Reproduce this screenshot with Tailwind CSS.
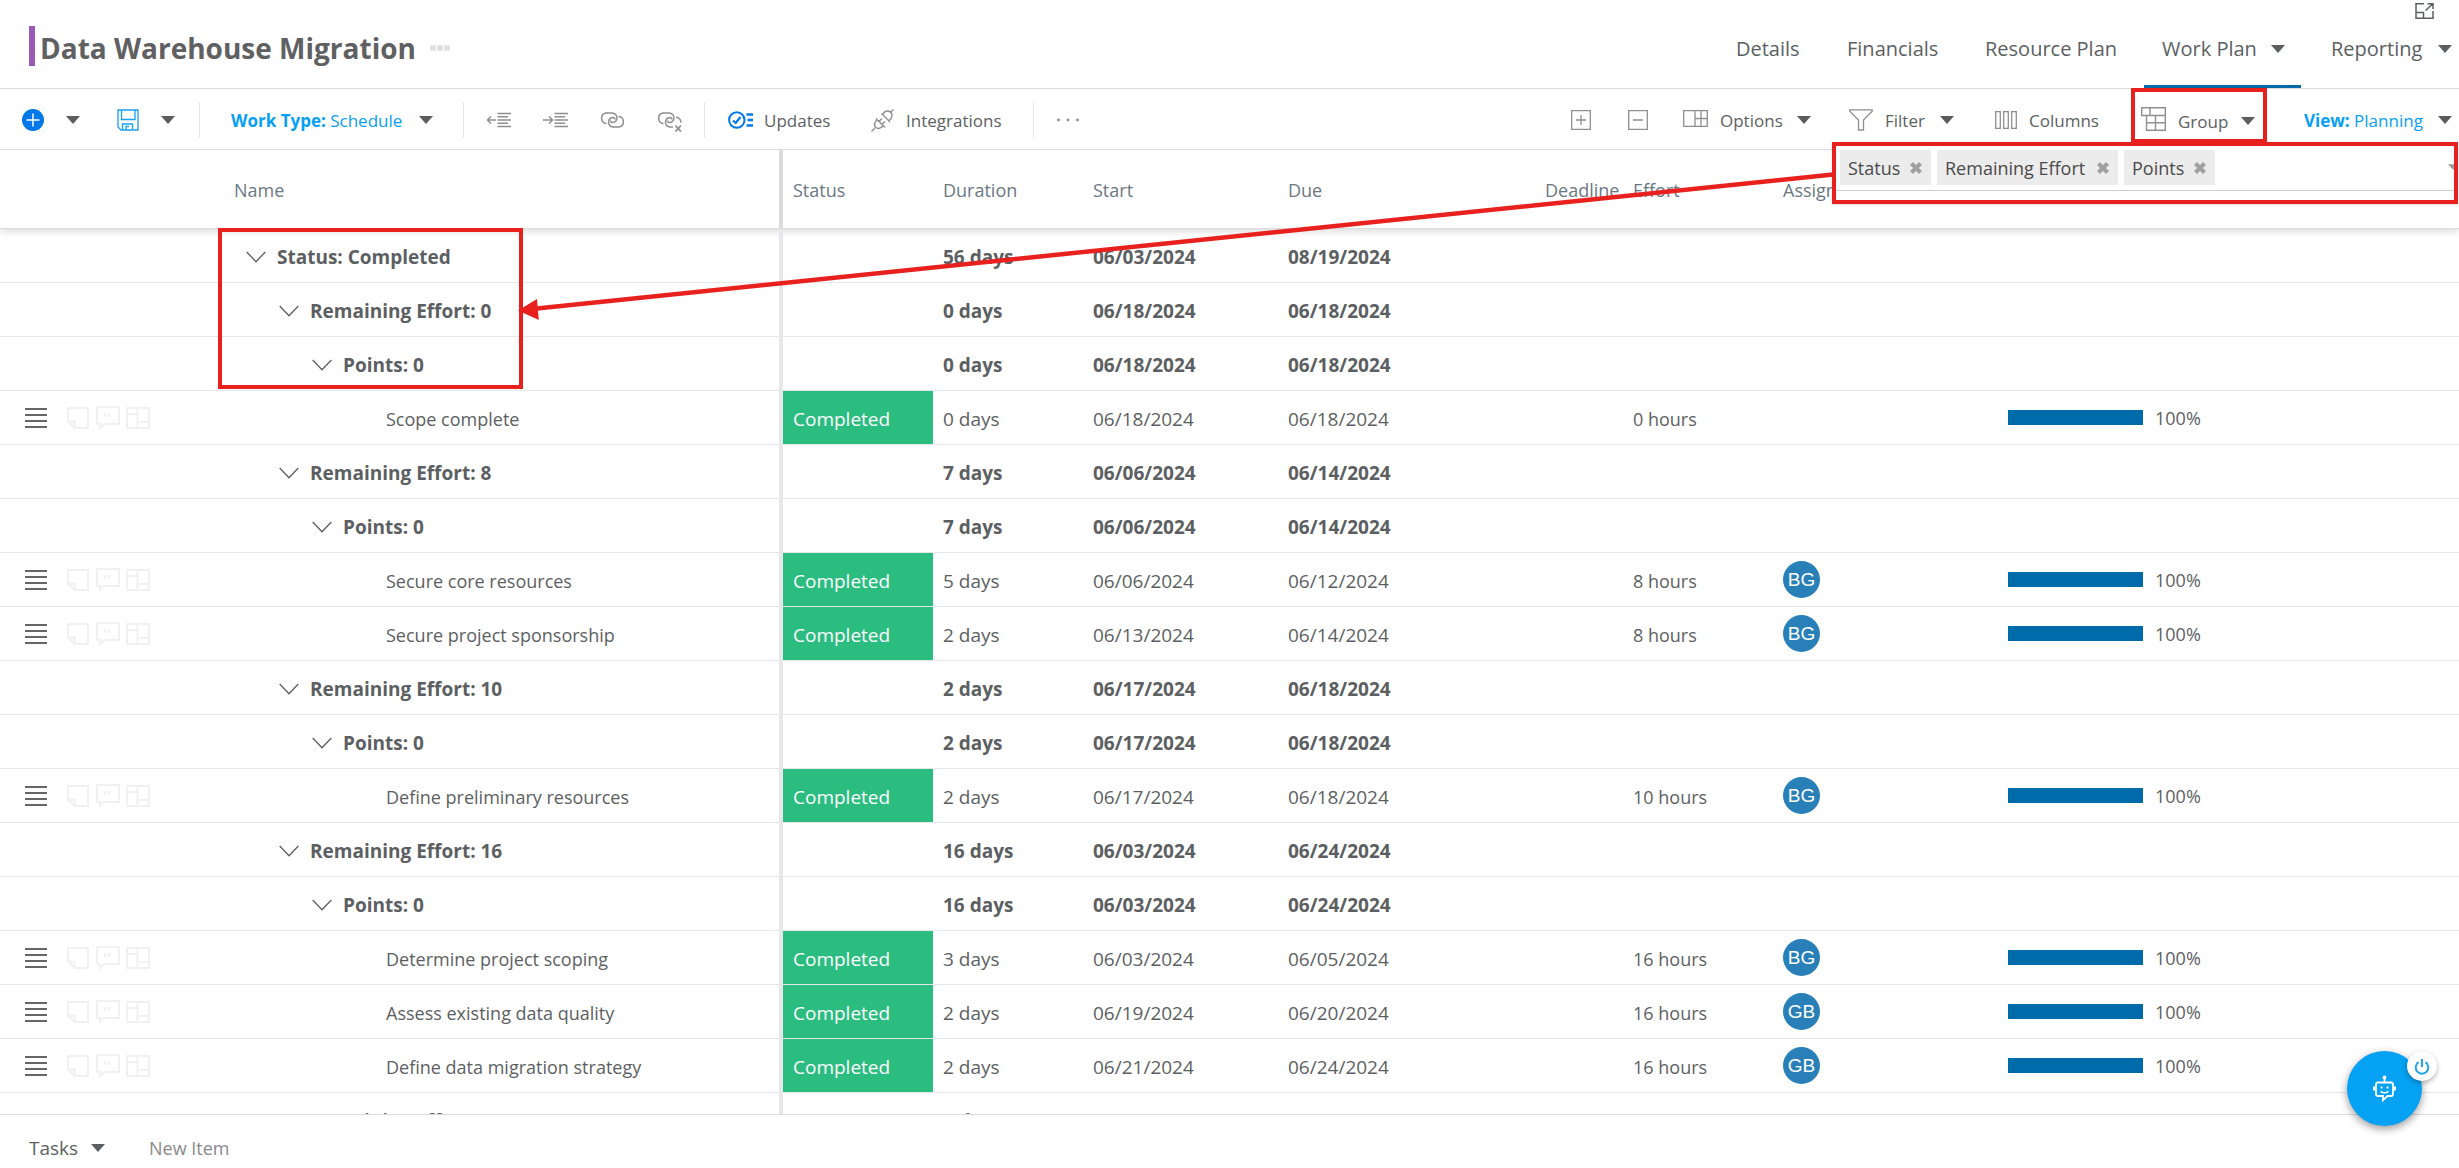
<!DOCTYPE html>
<html lang="en">
<head>
  <meta charset="UTF-8">
  <title>Data Warehouse Migration - Work Plan</title>
  <meta name="viewport" content="width=device-width,initial-scale=1">
  <script src="https://cdn.jsdelivr.net/npm/@tailwindcss/browser@4"></script>
</head>
<body class="relative h-screen flex flex-col overflow-hidden bg-white text-[#5c5f62] text-[19px] leading-6 font-['Segoe_UI','Open_Sans',sans-serif]">

  <!-- shared icons -->
  <svg class="hidden">
    <symbol id="i-caret" viewBox="0 0 14 8"><path d="M0 0h14L7 8z" fill="currentColor"/></symbol>
    <symbol id="i-chevron" viewBox="0 0 20 12"><path d="M.7 1 10 10.7 19.3 1" fill="none" stroke="currentColor" stroke-width="1.3"/></symbol>
    <symbol id="i-x" viewBox="0 0 14 14"><path d="M2.5 2.5l9 9M11.5 2.5l-9 9" fill="none" stroke="currentColor" stroke-width="4.2"/></symbol>
    <symbol id="i-drag" viewBox="0 0 22 20"><path d="M0 1h22M0 7h22M0 13h22M0 19h22" stroke="currentColor" stroke-width="2"/></symbol>
    <symbol id="i-note" viewBox="0 0 22 22"><path d="M1 1h20v20H8L1 14.500zM1 14.500h6.500V21" fill="none" stroke="currentColor" stroke-width="2"/></symbol>
    <symbol id="i-comment" viewBox="0 0 24 24"><path d="M1 1h22v17H8.500L4 22v-4H1z" fill="none" stroke="currentColor" stroke-width="2"/><path d="M9 7v4M13 7v4" stroke="currentColor" stroke-width="2.500"/></symbol>
    <symbol id="i-board" viewBox="0 0 24 22"><path d="M1 1h22v20H1zM11.500 1v20M1 7h10.500M11.500 15H23" fill="none" stroke="currentColor" stroke-width="2"/></symbol>
  </svg>

  <header class="h-[89px] shrink-0 border-b border-[#dcdcde] flex items-stretch">
    <div class="flex items-center pl-[29px]">
      <span class="w-[6px] h-10 mt-3 mb-2 bg-[#9b59b6]"></span>
      <h1 class="ml-[5px] mt-2 text-[28px] leading-8 font-bold text-[#5f6062]">Data Warehouse Migration</h1>
      <button class="ml-[14px] mt-2 flex gap-px" aria-label="More">
        <span class="size-[6px] rounded-xs bg-[#e0e0e0]"></span>
        <span class="size-[6px] rounded-xs bg-[#e0e0e0]"></span>
        <span class="size-[6px] rounded-xs bg-[#e0e0e0]"></span>
      </button>
    </div>
    <nav class="ml-auto flex items-stretch pt-[10px] whitespace-nowrap text-[20px]">
      <a href="#" class="w-[111px] flex items-center">Details</a>
      <a href="#" class="w-[138px] flex items-center">Financials</a>
      <a href="#" class="w-[159px] flex items-center">Resource Plan</a>
      <a href="#" class="w-[157px] flex items-center justify-between pl-[18px] pr-4 border-b-3 border-[#006ba6] pt-[3px]">Work Plan
        <svg class="w-[14px] h-2"><use href="#i-caret"/></svg></a>
      <a href="#" class="w-[158px] flex items-center justify-between pl-[30px] pr-[7px]">Reporting
        <svg class="w-[14px] h-2"><use href="#i-caret"/></svg></a>
    </nav>
    <button class="absolute top-[3px] right-[25px]" aria-label="Open in window">
      <svg class="w-[19px] h-4" viewBox="0 0 19 16" fill="none" stroke="currentColor" stroke-width="1.500"><path d="M9 .8H1v14.400h17V8M1 9.500h7.500v5.700M10.500 7.500 17.500 1M12.500.8H18V6"/></svg>
    </button>
  </header>

  <div class="h-[61px] pt-[2px] shrink-0 border-b border-[#dcdcde] flex items-center whitespace-nowrap text-[17px] text-[#8f8f8f]">
    <button class="ml-[22px]" aria-label="Add">
      <svg class="size-[22px]" viewBox="0 0 22 22"><circle cx="11" cy="11" r="11" fill="#0078e7"/><path d="M11 4.500v13M4.500 11h13" stroke="#fff" stroke-width="1.500"/></svg>
    </button>
    <button class="ml-[22px] text-[#5c5c5c]" aria-label="Add options"><svg class="w-[14px] h-2"><use href="#i-caret"/></svg></button>
    <button class="ml-[37px] text-[#17a0f0]" aria-label="Save">
      <svg class="size-[22px]" viewBox="0 0 22 22" fill="none" stroke="currentColor" stroke-width="1.300"><path d="M1 1h20v20H4l-3-3zM4.500 1v9.500h13.500V1M5.500 21v-6h10v6M9 21v-3.500h3"/></svg>
    </button>
    <button class="ml-[22px] text-[#5c5c5c]" aria-label="Save options"><svg class="w-[14px] h-2"><use href="#i-caret"/></svg></button>
    <span class="ml-6 w-px h-9 bg-[#e6e6e8]"></span>
    <button class="ml-[31px] w-[202px] flex items-center justify-between text-[#08a0f4]">
      <span class="pt-[2px]"><b>Work Type:</b> Schedule</span>
      <svg class="w-[14px] h-2 text-[#5c5c5c]"><use href="#i-caret"/></svg>
    </button>
    <span class="ml-[30px] w-px h-9 bg-[#e6e6e8]"></span>
    <button class="ml-[22px]" aria-label="Outdent">
      <svg class="w-[25px] h-4" viewBox="0 0 25 16" fill="none" stroke="currentColor" stroke-width="1.500"><path d="M11.500 1.500H25M11.500 4.700H22M11.500 8H25M11.500 11.300H22M11.500 14.500H25M10 8H1.500M5 4.500 1.500 8 5 11.500"/></svg>
    </button>
    <button class="ml-8" aria-label="Indent">
      <svg class="w-[25px] h-4" viewBox="0 0 25 16" fill="none" stroke="currentColor" stroke-width="1.500"><path d="M11.500 1.500H25M11.500 4.700H22M11.500 8H25M11.500 11.300H22M11.500 14.500H25M0 8h9.500M6 4.500 9.500 8 6 11.500"/></svg>
    </button>
    <button class="ml-8" aria-label="Link">
      <svg class="w-[25px] h-4" viewBox="0 0 25 16" fill="none" stroke="currentColor" stroke-width="1.500"><path d="M6.500 11.500A5.300 5.300 0 0 1 6 1h6q4.800.5 5 5-.3 3.800-4 4.500-2.500.2-2.500-2M18.500 4.500a5.300 5.300 0 0 1 .5 10.500h-6q-4.500-.5-4.500-5 .3-4 4-4.500 2.500 0 2.500 2"/></svg>
    </button>
    <button class="ml-8" aria-label="Unlink">
      <svg class="w-[25px] h-5 mt-1" viewBox="0 0 25 20" fill="none" stroke="currentColor" stroke-width="1.500"><path d="M6.500 11.500A5.300 5.300 0 0 1 6 1h6q4.800.5 5 5-.3 3.800-4 4.500-2.500.2-2.500-2M19 5q4.500.8 5 5.500M16 15h-3q-4.500-.5-4.500-5 .3-4 4-4.500 2.500 0 2.500 2"/><path d="M18.500 13.500l5.500 6M24 13.500l-5.500 6" stroke-width="1.800"/></svg>
    </button>
    <span class="ml-[22px] w-px h-9 bg-[#e6e6e8]"></span>
    <button class="ml-[23px] w-[143px] flex items-center gap-[11px]">
      <svg class="w-[25px] h-[18px]" viewBox="0 0 25 18" fill="none" stroke="#0078e7"><circle cx="8.800" cy="9" r="7.700" stroke-width="2"/><path d="M5 9.500l2.700 2.500L12.500 6" stroke-width="2.200"/><path d="M18.500 3.500H25M19.500 9H25M18.500 14.500H25" stroke-width="2.400"/></svg>
      <span class="pt-[2px] text-[#5c5f62]">Updates</span>
    </button>
    <button class="w-[162px] flex items-center gap-3">
      <svg class="size-[23px]" viewBox="0 0 23 23" fill="none" stroke="currentColor" stroke-width="1.400"><path d="M.5 22.500 4 19M19 4 22.500.5M5 9.500l9 9M4.700 18.300q-3-3.500 1.500-7.500M4.700 18.300q3.500 3 7.500-1.500M8 12.500l3-3M11 15.500l3-3M10.500 4.500l8.500 8.500M11.700 5.600q2-4 5-3.600 4.500.5 4.300 4.800-.3 2.700-3.200 5"/></svg>
      <span class="pt-[2px] text-[#5c5f62]">Integrations</span>
    </button>
    <span class="w-px h-9 bg-[#e6e6e8]"></span>
    <button class="ml-[23px]" aria-label="More actions">
      <svg class="w-[22px] h-1" viewBox="0 0 22 4" fill="currentColor"><circle cx="1.500" cy="2" r="1.400"/><circle cx="11" cy="2" r="1.400"/><circle cx="20.500" cy="2" r="1.400"/></svg>
    </button>

    <button class="ml-auto" aria-label="Expand all">
      <svg class="size-5" viewBox="0 0 20 20" fill="none" stroke="currentColor" stroke-width="1.300"><path d="M.7.7h18.600v18.600H.7zM10 5v10M5 10h10"/></svg>
    </button>
    <button class="ml-[37px]" aria-label="Collapse all">
      <svg class="size-5" viewBox="0 0 20 20" fill="none" stroke="currentColor" stroke-width="1.300"><path d="M.7.7h18.600v18.600H.7zM5 10h10"/></svg>
    </button>
    <button class="ml-[35px] w-[128px] flex items-center gap-3">
      <svg class="w-[25px] h-[17px] mb-[3px]" viewBox="0 0 25 17" fill="none" stroke="currentColor" stroke-width="1.300"><path d="M.7.7h23.600v15.600H.7zM12 .7v15.600M18 .7v15.600M12 8.500h12.300"/></svg>
      <span class="pt-[2px] text-[#5c5f62]">Options</span>
      <svg class="ml-auto w-[14px] h-2 text-[#5c5c5c]"><use href="#i-caret"/></svg>
    </button>
    <button class="ml-[38px] w-[105px] flex items-center gap-3">
      <svg class="w-6 h-[22px]" viewBox="0 0 24 22" fill="none" stroke="currentColor" stroke-width="1.300"><path d="M.8.8h22.400v1.400L14.500 11v10h-5V11L.8 2.200z"/></svg>
      <span class="pt-[2px] text-[#5c5f62]">Filter</span>
      <svg class="ml-auto w-[14px] h-2 text-[#5c5c5c]"><use href="#i-caret"/></svg>
    </button>
    <button class="ml-[41px] w-[108px] flex items-center gap-3">
      <svg class="w-[22px] h-[18px]" viewBox="0 0 22 18" fill="none" stroke="currentColor" stroke-width="1.300"><path d="M.7.7h4.600v16.600H.7zM8.700.7h4.600v16.600H8.700zM16.700.7h4.600v16.600h-4.600z"/></svg>
      <span class="pt-[2px] text-[#5c5f62]">Columns</span>
    </button>
    <div class="relative z-10 ml-[28px] -mt-[3px] w-[136px] h-[55px] self-start border-4 border-[#e8211f] flex">
      <button class="flex-1 flex items-center gap-3 pt-[10px] pl-[6px] pr-2">
        <svg class="w-[25px] h-6 mb-1" viewBox="0 0 25 24" fill="none" stroke="currentColor" stroke-width="1.400"><path d="M.7.7h23.600v22.600H5.500V8.500H.7zM9 .7v7.800M5.500 8.500h18.800M5.500 15.800h18.800M14.500 8.500v14.800"/></svg>
        <span class="pt-[2px] text-[#5c5f62]">Group</span>
        <svg class="ml-auto w-[14px] h-2 text-[#5c5c5c]"><use href="#i-caret"/></svg>
      </button>
    </div>
    <button class="ml-[37px] mr-[7px] w-[148px] flex items-center justify-between text-[#08a0f4]">
      <span class="pt-[2px]"><b>View:</b> Planning</span>
      <svg class="w-[14px] h-2 text-[#5c5c5c]"><use href="#i-caret"/></svg>
    </button>
  </div>

  <main class="relative flex-1 min-h-0 overflow-hidden">
    <table class="w-full table-fixed border-separate border-spacing-0 text-left whitespace-nowrap">
      <colgroup>
        <col class="w-[224px]"><col class="w-[559px]"><col class="w-[150px]"><col class="w-[150px]"><col class="w-[195px]">
        <col class="w-[257px]"><col class="w-[88px]"><col class="w-[150px]"><col class="w-[225px]"><col>
      </colgroup>
      <thead class="text-[18px] text-[#6b7882] shadow-[0_2px_8px_rgba(0,0,0,0.16)]">
        <tr class="h-[79px] *:px-[10px] *:pt-[2px] *:font-normal *:border-b *:border-[#dcdcde]">
          <th></th>
          <th class="border-r-4 border-r-[#e3e3e5]">Name</th>
          <th>Status</th><th>Duration</th><th>Start</th><th>Due</th><th>Deadline</th><th>Effort</th><th>Assigned To</th><th></th>
        </tr>
      </thead>
      <tbody id="rows"></tbody>
    </table>

    <!-- callout: group headings -->
    <div class="absolute top-[78px] left-[218px] w-[305px] h-[161px] border-4 border-[#e8211f]"></div>
  </main>

  <footer class="h-[54px] shrink-0 border-t border-[#dcdcde] flex items-center pl-[29px] pt-3 text-[19px]">
    <button class="w-[76px] flex items-center justify-between">Tasks
      <svg class="w-[14px] h-2"><use href="#i-caret"/></svg></button>
    <input type="text" aria-label="New Item" placeholder="New Item" class="ml-11 flex-1 text-[18px] outline-none placeholder:text-[#8a8a8a]">
  </footer>

  <!-- group-by picker -->
  <div class="absolute top-[142px] right-px w-[626px] h-[62px] bg-white border-4 border-[#e8211f] px-1 shadow-sm">
    <div class="h-[45px] pt-1 -mx-1 px-1 border-b border-[#cfcfcf] flex items-start gap-[6px] overflow-hidden text-[18px] text-[#4a4a4a]">
      <span class="w-[91px] h-[35px] px-2 bg-[#ececec] flex items-center justify-between">Status
        <button class="text-[#a0a0a0]" aria-label="Remove Status"><svg class="size-[14px]"><use href="#i-x"/></svg></button></span>
      <span class="w-[181px] h-[35px] px-2 bg-[#ececec] flex items-center justify-between">Remaining Effort
        <button class="text-[#a0a0a0]" aria-label="Remove Remaining Effort"><svg class="size-[14px]"><use href="#i-x"/></svg></button></span>
      <span class="w-[91px] h-[35px] px-2 bg-[#ececec] flex items-center justify-between">Points
        <button class="text-[#a0a0a0]" aria-label="Remove Points"><svg class="size-[14px]"><use href="#i-x"/></svg></button></span>
      <svg class="ml-auto mt-[14px] -mr-2 w-[10px] h-[6px] shrink-0 text-[#999]"><use href="#i-caret"/></svg>
    </div>
  </div>

  <!-- callout arrow -->
  <svg class="absolute top-0 left-0 w-[1840px] h-[340px] pointer-events-none" viewBox="0 0 1840 340">
    <path d="M1833 174.500 532 309" stroke="#e8211f" stroke-width="4.500"/>
    <path d="M518 310.500 537 299l1.800 21z" fill="#e8211f"/>
  </svg>

  <!-- assistant -->
  <div class="absolute right-[37px] bottom-[42px] size-[75px]">
    <button class="size-[75px] rounded-full bg-[#05a1f2] shadow-[0_3px_8px_rgba(0,0,0,0.4)] flex items-center justify-center text-white" aria-label="Assistant">
      <svg class="w-[23px] h-[27px]" viewBox="0 0 23 27" fill="none" stroke="currentColor" stroke-width="1.800"><circle cx="11.500" cy="2.500" r="1.900" fill="currentColor" stroke="none"/><path d="M11.500 3v4M5 7.500h13q2 0 2 2v9.500q0 2-2 2h-3.500L10 25.200V21H5q-2 0-2-2V9.500q0-2 2-2z"/><path d="M1 11.500v4M22 11.500v4" stroke-width="2"/><path d="M7.500 16.300q4 2.800 8 0" stroke-width="1.600"/><path d="M7.500 11.500h2v2h-2zM13.500 11.500h2v2h-2z" fill="currentColor" stroke="none"/></svg>
    </button>
    <button class="absolute top-0 -right-[15px] size-[30px] rounded-full bg-white shadow-[0_2px_5px_rgba(0,0,0,0.3)] flex items-center justify-center text-[#1fa3ea]" aria-label="Turn off assistant">
      <svg class="size-4 mt-[2px]" viewBox="0 0 16 16" fill="none" stroke="currentColor" stroke-width="2"><path d="M4.500 3.200a6.300 6.300 0 1 0 7 0M8 0v8"/></svg>
    </button>
  </div>

  <script>
    // group rows: [level, label, duration, start, due]
    // task rows:  [0, name, duration, start, due, effort, assignee]
    const rows = [
      [1, 'Status: Completed', '56 days', '06/03/2024', '08/19/2024'],
      [2, 'Remaining Effort: 0', '0 days', '06/18/2024', '06/18/2024'],
      [3, 'Points: 0', '0 days', '06/18/2024', '06/18/2024'],
      [0, 'Scope complete', '0 days', '06/18/2024', '06/18/2024', '0 hours', ''],
      [2, 'Remaining Effort: 8', '7 days', '06/06/2024', '06/14/2024'],
      [3, 'Points: 0', '7 days', '06/06/2024', '06/14/2024'],
      [0, 'Secure core resources', '5 days', '06/06/2024', '06/12/2024', '8 hours', 'BG'],
      [0, 'Secure project sponsorship', '2 days', '06/13/2024', '06/14/2024', '8 hours', 'BG'],
      [2, 'Remaining Effort: 10', '2 days', '06/17/2024', '06/18/2024'],
      [3, 'Points: 0', '2 days', '06/17/2024', '06/18/2024'],
      [0, 'Define preliminary resources', '2 days', '06/17/2024', '06/18/2024', '10 hours', 'BG'],
      [2, 'Remaining Effort: 16', '16 days', '06/03/2024', '06/24/2024'],
      [3, 'Points: 0', '16 days', '06/03/2024', '06/24/2024'],
      [0, 'Determine project scoping', '3 days', '06/03/2024', '06/05/2024', '16 hours', 'BG'],
      [0, 'Assess existing data quality', '2 days', '06/19/2024', '06/20/2024', '16 hours', 'GB'],
      [0, 'Define data migration strategy', '2 days', '06/21/2024', '06/24/2024', '16 hours', 'GB'],
      [2, 'Remaining Effort: 20', '4 days', '', ''],
    ];
    const indent = { 1: 'ml-3', 2: 'ml-[45px]', 3: 'ml-[78px]' };

    const groupRow = ([level, label, dur, start, due]) => `
      <tr class="h-[54px] font-bold *:px-[10px] *:pt-[2px] *:border-b *:border-[#e6e7e9]">
        <td></td>
        <td class="border-r-4 border-r-[#e3e3e5]">
          <button class="flex items-center gap-[11px] ${indent[level]}" aria-expanded="true">
            <svg class="w-5 h-3 shrink-0"><use href="#i-chevron"/></svg>${label}
          </button>
        </td>
        <td></td><td>${dur}</td><td>${start}</td><td>${due}</td><td></td><td></td><td></td><td></td>
      </tr>`;

    const taskRow = ([, name, dur, start, due, effort, who]) => `
      <tr class="h-[54px] *:px-[10px] *:pt-[2px] *:border-b *:border-[#e6e7e9]">
        <td class="pb-[2px]">
          <div class="flex items-center pl-[15px]">
            <svg class="w-[22px] h-5 mr-5 text-[#666]"><use href="#i-drag"/></svg>
            <svg class="size-[22px] mr-[7px] text-[#f1f1f2]"><use href="#i-note"/></svg>
            <svg class="size-6 mr-[6px] text-[#f1f1f2]"><use href="#i-comment"/></svg>
            <svg class="w-6 h-[22px] text-[#f1f1f2]"><use href="#i-board"/></svg>
          </div>
        </td>
        <td class="border-r-4 border-r-[#e3e3e5] text-[18px]"><span class="ml-[152px]">${name}</span></td>
        <td class="bg-[#2bbc7f] text-white">Completed</td>
        <td>${dur}</td><td>${start}</td><td>${due}</td><td></td><td class="text-[18px]">${effort}</td>
        <td class="pb-[2px]">${who && `<span class="size-[37px] rounded-full bg-[#2980b9] text-white flex items-center justify-center font-['Liberation_Sans',sans-serif]">${who}</span>`}</td>
        <td class="pb-[2px]">
          <div class="flex items-center gap-3 text-[18px]">
            <div class="w-[135px] h-[15px]"><div class="h-full bg-[#006bab]" style="width:100%"></div></div>100%
          </div>
        </td>
      </tr>`;

    document.getElementById('rows').innerHTML = rows.map(r => r[0] ? groupRow(r) : taskRow(r)).join('');
  </script>
</body>
</html>
